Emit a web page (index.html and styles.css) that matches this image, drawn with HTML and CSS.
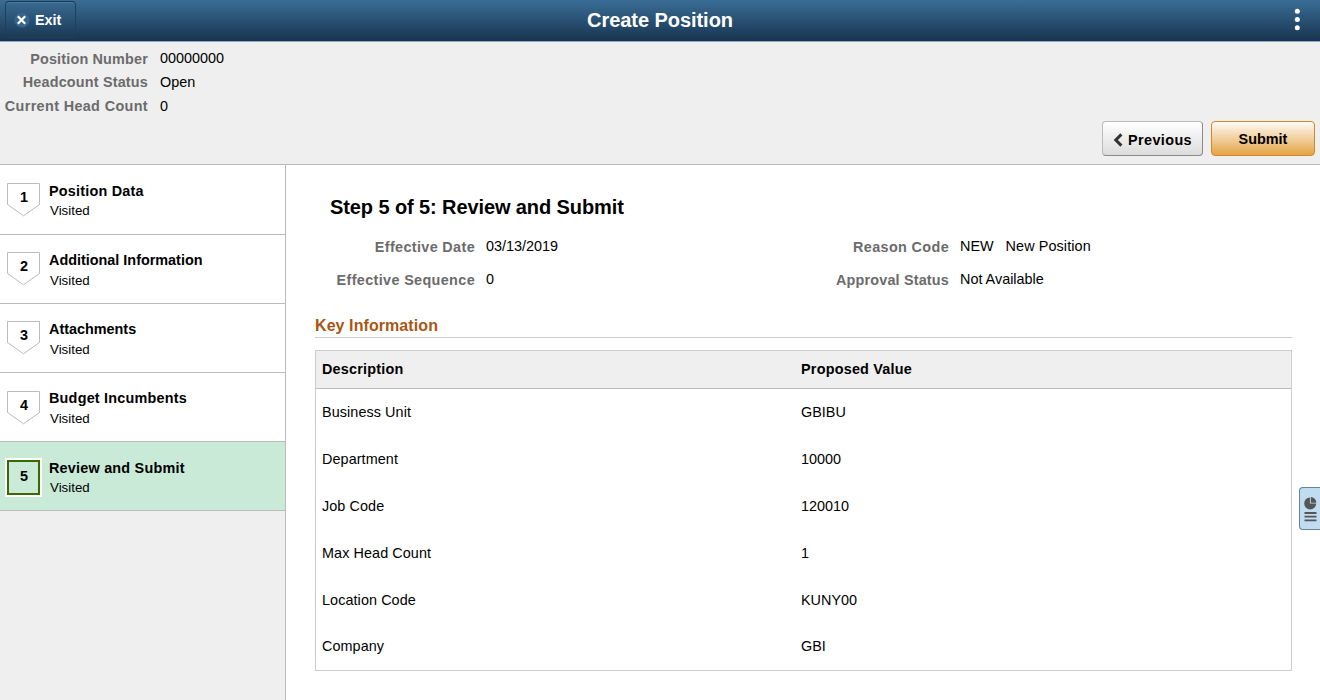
FILE: index.html
```
<!DOCTYPE html>
<html lang="en">
<head>
    <meta charset="UTF-8">
    <meta name="viewport" content="width=device-width, initial-scale=1.0">
    <title>Create Position</title>
    <link rel="stylesheet" href="styles.css">
</head>
<body>
    <header class="banner">
        <button class="exit-button">
            <svg class="exit-icon" width="16" height="16" viewBox="0 0 16 16">
                <circle cx="8" cy="8" r="7.6" fill="#36658b"/>
                <path d="M3.8 4.2l7.4 7.6M11.2 4.2l-7.4 7.6" stroke="#fff" stroke-width="2.2"/>
            </svg>
            <span>Exit</span>
        </button>
        <h1 class="banner-title">Create Position</h1>
        <button class="menu-button" aria-label="Actions">
            <svg width="6" height="24" viewBox="0 0 6 24" fill="#fff">
                <circle cx="3.3" cy="3.3" r="2.5"/>
                <circle cx="3.3" cy="11.5" r="2.5"/>
                <circle cx="3.3" cy="19.8" r="2.5"/>
            </svg>
        </button>
    </header>

    <!-- Position summary and page buttons -->
    <section class="summary">
        <dl class="summary-fields">
            <dt>Position Number</dt><dd>00000000</dd>
            <dt>Headcount Status</dt><dd>Open</dd>
            <dt class="wide">Current Head Count</dt><dd>0</dd>
        </dl>
        <div class="actions">
            <button class="button previous">
                <svg width="10" height="14" viewBox="0 0 10 14">
                    <path d="M8.4 1.4L2.8 7L8.4 12.6" fill="none" stroke="#333" stroke-width="3"/>
                </svg>
                <span>Previous</span>
            </button>
            <button class="button submit">Submit</button>
        </div>
    </section>

    <div class="page">
        <!-- Steps -->
        <nav class="sidebar">
            <div class="step">
                <div class="badge">
                    <svg class="badge-shape" width="33" height="34" viewBox="0 0 33 34"><path d="M.5 21.5V.5h32v21M.5 21.5l16 11.3l16-11.3" fill="#fff" stroke="#bbb"/></svg>
                    <span class="badge-number">1</span>
                </div>
                <div class="step-text"><div class="step-title wide">Position Data</div><div class="step-status">Visited</div></div>
            </div>
            <div class="step">
                <div class="badge">
                    <svg class="badge-shape" width="33" height="34" viewBox="0 0 33 34"><path d="M.5 21.5V.5h32v21M.5 21.5l16 11.3l16-11.3" fill="#fff" stroke="#bbb"/></svg>
                    <span class="badge-number">2</span>
                </div>
                <div class="step-text"><div class="step-title">Additional Information</div><div class="step-status">Visited</div></div>
            </div>
            <div class="step">
                <div class="badge">
                    <svg class="badge-shape" width="33" height="34" viewBox="0 0 33 34"><path d="M.5 21.5V.5h32v21M.5 21.5l16 11.3l16-11.3" fill="#fff" stroke="#bbb"/></svg>
                    <span class="badge-number">3</span>
                </div>
                <div class="step-text"><div class="step-title">Attachments</div><div class="step-status">Visited</div></div>
            </div>
            <div class="step">
                <div class="badge low">
                    <svg class="badge-shape" width="33" height="34" viewBox="0 0 33 34"><path d="M.5 21.5V.5h32v21M.5 21.5l16 11.3l16-11.3" fill="#fff" stroke="#bbb"/></svg>
                    <span class="badge-number">4</span>
                </div>
                <div class="step-text"><div class="step-title wide">Budget Incumbents</div><div class="step-status">Visited</div></div>
            </div>
            <div class="step active">
                <div class="badge"><span class="badge-number">5</span></div>
                <div class="step-text"><div class="step-title wide">Review and Submit</div><div class="step-status">Visited</div></div>
            </div>
        </nav>

        <main class="content">
            <h2 class="content-title">Step 5 of 5: Review and Submit</h2>

            <dl class="details">
                <dt class="wide">Effective Date</dt><dd>03/13/2019</dd>
                <dt class="wide">Reason Code</dt><dd><span class="code">NEW</span><span class="code-name">New Position</span></dd>
                <dt class="wide">Effective Sequence</dt><dd>0</dd>
                <dt>Approval Status</dt><dd>Not Available</dd>
            </dl>

            <h3 class="section-title">Key Information</h3>
            <table class="key-table">
                <thead>
                    <tr><th>Description</th><th>Proposed Value</th></tr>
                </thead>
                <tbody>
                    <tr><td>Business Unit</td><td>GBIBU</td></tr>
                    <tr><td>Department</td><td>10000</td></tr>
                    <tr><td>Job Code</td><td>120010</td></tr>
                    <tr><td>Max Head Count</td><td>1</td></tr>
                    <tr><td>Location Code</td><td>KUNY00</td></tr>
                    <tr><td>Company</td><td>GBI</td></tr>
                </tbody>
            </table>
        </main>
    </div>

    <!-- Side tab over the right edge -->
    <div class="side-tab">
        <svg width="14" height="26" viewBox="0 0 14 26">
            <path d="M6.9 1.4A6 6 0 1 0 13.2 7.6H6.9z" fill="#555"/>
            <path d="M7.8 1.1A5.6 5.6 0 0 1 13.3 6.7H7.8z" fill="#555"/>
            <path d="M1.5 17h12M1.5 20.7h12M1.5 24.4h12" stroke="#555" stroke-width="1.8"/>
        </svg>
    </div>
</body>
</html>
```
FILE: styles.css
```
* {
    box-sizing: border-box;
}

body {
    margin: 0;
    height: 100vh;
    display: flex;
    flex-direction: column;
    overflow: hidden;
    font-family: "Liberation Sans", Arial, sans-serif;
    font-size: 14.4px;
    line-height: 18px;
    color: #000;
    background: #fff;
}

h1, h2, h3, dl, dd {
    margin: 0;
}

button {
    font: inherit;
    font-weight: bold;
    padding: 0;
}

.banner {
    height: 42px;
    flex: none;
    display: grid;
    grid-template-columns: 1fr auto 1fr;
    align-items: start;
    background: linear-gradient(#3a6d95, #18344f);
    border-bottom: 1px solid #87a9cb;
}

.exit-button {
    display: flex;
    align-items: center;
    gap: 5px;
    width: 71px;
    height: 37px;
    margin: 1px 0 0 5px;
    padding-left: 8px;
    color: #fff;
    background: transparent;
    border: 1px solid #1d405e;
    border-top-color: #173650;
    border-radius: 4px;
    box-shadow: inset 0 1px 0 #4d7b9f;
}

.banner-title {
    font-size: 20px;
    line-height: 40px;
    letter-spacing: -0.05px;
    color: #fff;
}

.menu-button {
    justify-self: end;
    height: 24px;
    margin: 8px 20px 0 0;
    border: 0;
    background: none;
}

.menu-button svg {
    display: block;
}

.summary {
    height: 123px;
    flex: none;
    display: flex;
    justify-content: space-between;
    padding: 5px 5px 0 0;
    background: #efefef;
    border-bottom: 1px solid #bbb;
}

.summary-fields {
    display: grid;
    grid-template-columns: 148px auto;
    grid-auto-rows: 24px;
    column-gap: 12px;
    align-content: start;
    line-height: 23px;
}

dt {
    text-align: right;
    font-weight: bold;
    letter-spacing: 0.18px;
    color: #6b6b6b;
}

dt.wide {
    letter-spacing: 0.36px;
}

.summary-fields dt:first-child,
.details dt {
    padding-top: 1px;
}

.actions {
    display: flex;
    gap: 8px;
    align-self: flex-end;
    margin-bottom: 8px;
}

.button {
    display: flex;
    align-items: center;
    justify-content: center;
    height: 35px;
    border-radius: 4px;
}

.previous {
    width: 101px;
    gap: 5px;
    padding-top: 2px;
    letter-spacing: 0.4px;
    background: linear-gradient(#fff, #dcdcdc);
    border: 1px solid #bbb;
    border-right-color: #8a8a8a;
    border-bottom-color: #8a8a8a;
}

.submit {
    width: 104px;
    background: linear-gradient(#fefbf6, #e5a344);
    border: 1px solid #cf8a25;
}

.page {
    flex: 1;
    display: flex;
    min-height: 0;
}

.sidebar {
    width: 286px;
    flex: none;
    background: #efefef;
    border-right: 1px solid #bbb;
}

.step {
    display: flex;
    gap: 9px;
    height: 69px;
    padding: 17px 0 0 7px;
    background: #fff;
    border-bottom: 1px solid #bbb;
}

.step:first-child {
    height: 70px;
    padding-top: 18px;
}

.badge {
    display: grid;
    width: 33px;
    height: 34px;
}

.badge.low {
    margin-top: 1px;
}

.badge-shape,
.badge-number {
    grid-area: 1 / 1;
}

.badge-number {
    padding-left: 1px;
    text-align: center;
    font-weight: bold;
    line-height: 28px;
}

.step-title {
    font-weight: bold;
    margin-top: -1px;
}

.step-title.wide {
    letter-spacing: 0.22px;
}

.step-status {
    font-size: 13.3px;
    margin: 3px 0 0 1px;
}

.step:first-child .step-status {
    margin-top: 2px;
}

.step.active {
    background: #c9ead7;
}

.step.active .step-title {
    margin-top: 0;
}

.step.active .step-status {
    margin-top: 2px;
}

.step.active .badge {
    height: 35px;
    margin-top: 1px;
    border: 2px solid #396900;
    box-shadow: 0 0 0 2px #fff;
}

.content {
    flex: 1;
    padding: 30px 28px 0 29px;
}

.content-title {
    margin-left: 15px;
    font-size: 20px;
    line-height: 24px;
    letter-spacing: -0.1px;
}

.details {
    display: grid;
    grid-template-columns: 160px 280px 172px auto;
    grid-auto-rows: 33px;
    column-gap: 11px;
    margin-top: 18px;
}

.code {
    margin-right: 12px;
}

.code-name {
    letter-spacing: 0.1px;
}

.section-title {
    margin-top: 11px;
    font-size: 16px;
    line-height: 24px;
    height: 24px;
    letter-spacing: 0.08px;
    color: #a85614;
    border-bottom: 1px solid #ccc;
}

.key-table {
    width: 100%;
    height: 321px;
    margin-top: 12px;
    table-layout: fixed;
    border-collapse: separate;
    border-spacing: 0;
    border: 1px solid #ccc;
}

.key-table th {
    height: 38px;
    padding: 0 6px 2px;
    text-align: left;
    letter-spacing: 0.22px;
    background: #efefef;
    border-bottom: 1px solid #bbb;
}

.key-table th:first-child {
    width: 479px;
}

.key-table td {
    height: 46.8px;
    padding: 14.2px 6px 0;
    vertical-align: top;
}

.key-table td:first-child {
    letter-spacing: 0.08px;
}

.side-tab {
    position: absolute;
    right: 0;
    top: 487px;
    width: 21px;
    height: 43px;
    padding: 8px 0 0 3px;
    background: #bfdcf0;
    border: 1px solid #6a8296;
    border-right: 0;
    border-radius: 4px 0 0 4px;
}

.side-tab svg {
    display: block;
}
```
